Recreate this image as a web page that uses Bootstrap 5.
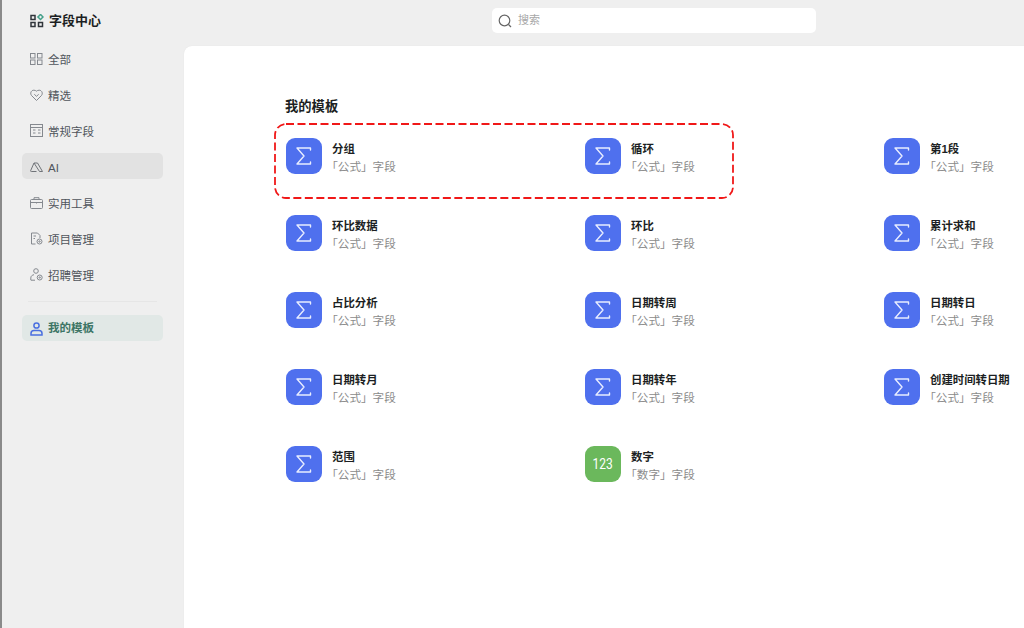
<!DOCTYPE html>
<html lang="zh">
<head>
<meta charset="utf-8">
<title>字段中心</title>
<link rel="stylesheet" href="https://cdn.jsdelivr.net/npm/bootstrap@5.3.0/dist/css/bootstrap.min.css">
<style>
html,body{height:100%;overflow:hidden}
body{background:#efefef;font-family:"Liberation Sans","Noto Sans CJK SC",sans-serif;font-size:12px;color:#1f2329}
.app-shell{height:628px;border-left:2px solid #8a8a8a}
.side-pane{width:182px;flex:none}
.brand-row{height:40px;padding-left:28px;padding-top:1px;gap:5px;font-size:13px;font-weight:700;color:#1c1f23}
.side-list{padding:5px 21px 0 20px;gap:10px}
.side-item{height:26px;border-radius:5px;padding:1px 0 0 8px;gap:5px;color:#50555c;font-size:11.500px}
.side-item svg{flex:none}
.side-item span{margin-top:4px}
.side-item.is-hover{background:#e2e2e2}
.side-item.is-active{background:#e1e8e6;color:#3d7565;font-weight:700}
.side-item.is-active span{margin-top:0}
.side-rule{height:1px;background:#e6e6e6;margin:4px 6px 3px 6px}
.main-pane{min-width:0}
.top-bar{height:46px;padding:8px 0 0 308px;flex:none}
.search-box{width:324px;height:25px;background:#fff;border-radius:5px;padding-left:6px;gap:6px;color:#a8a8a8;font-size:11px}
.canvas-pane{background:#fff;border-top-left-radius:8px;box-shadow:0 0 1px #dcdcdc;padding:51px 0 0 101px;overflow:hidden;min-height:0}
.sec-title{font-size:13.300px;font-weight:700;line-height:20px;color:#1c1f23;margin-bottom:21px}
.field-grid{display:grid;grid-template-columns:repeat(3,299px);grid-auto-rows:36px;row-gap:41px;width:897px;margin-left:1px}
.field-cell{gap:10px}
.field-icon{width:36px;height:36px;border-radius:9px;background:#4f70ee;flex:none;color:#fff}
.field-icon.is-num{background:#6bb85c;font-family:Roboto,sans-serif;font-size:15px}
.num-glyphs{display:inline-block;transform:scaleX(.8)}
.field-copy{margin-top:3px}
.field-name{font-size:11.400px;font-weight:700;line-height:18px;color:#1c1f23}
.field-sub{font-size:11.600px;line-height:18px;color:#8b8b8b;text-indent:-5.800px}
.pick-frame{position:absolute;left:-12px;top:-15px;pointer-events:none}
</style>
</head>
<body>
<svg width="0" height="0" class="position-absolute">
  <defs>
    <symbol id="sig" viewBox="0 0 36 36"><path d="M24.500 12V10H11l7 8-7 8h13.500v-2" fill="none" stroke="#e8edff" stroke-width="1.400" stroke-linejoin="round" stroke-linecap="round"/></symbol>
  </defs>
</svg>
<div class="app-shell d-flex">
  <aside class="side-pane d-flex flex-column">
    <div class="brand-row d-flex align-items-center">
      <svg width="14" height="14" viewBox="0 0 14 14" fill="none" stroke="#30353b" stroke-width="1.500"><rect x="1" y="1.500" width="4" height="4"/><rect x="1" y="8.500" width="4" height="4"/><rect x="8.500" y="8.500" width="4" height="4"/><rect x="8.700" y="1.200" width="3.600" height="3.600" transform="rotate(45 10.500 3)" stroke="#45a08a"/></svg>
      <span>字段中心</span>
    </div>
    <nav class="side-list d-flex flex-column">
      <div class="side-item d-flex align-items-center">
        <svg width="13" height="12" viewBox="0 0 13 12" fill="none" stroke="#85898f"><rect x=".5" y=".5" width="4.500" height="4.500"/><rect x="7.500" y=".5" width="4.500" height="4.500"/><rect x=".5" y="7" width="4.500" height="4.500"/><rect x="7.500" y="7" width="4.500" height="4.500"/></svg>
        <span>全部</span>
      </div>
      <div class="side-item d-flex align-items-center">
        <svg width="13" height="12" viewBox="0 0 13 12" fill="none" stroke="#85898f"><path d="M6.500 11.500 1.600 6.600C-.2 4.600 1 1.200 3.800 1.200c1.100 0 2 .3 2.700 1 .7-.7 1.600-1 2.700-1 2.800 0 4 3.400 2.200 5.400z"/><path d="M4.300 5.300 6.500 7.300l2.200-2"/></svg>
        <span>精选</span>
      </div>
      <div class="side-item d-flex align-items-center">
        <svg width="13" height="13" viewBox="0 0 13 13" fill="none" stroke="#85898f"><rect x=".5" y=".5" width="12" height="12"/><path d="M.5 3.500h12M3 6h2.500M3 9h2.500M8 6h2.500M8 9h2.500"/></svg>
        <span>常规字段</span>
      </div>
      <div class="side-item is-hover d-flex align-items-center">
        <svg width="13" height="12" viewBox="0 0 13 12" fill="none" stroke="#6f7378"><path d="M4 2 .7 9.500a.7.7 0 0 0 .6 1H6.500"/><path d="M4 2h3.500l5 8.500H9.500z"/></svg>
        <span>AI</span>
      </div>
      <div class="side-item d-flex align-items-center">
        <svg width="13" height="12" viewBox="0 0 13 12" fill="none" stroke="#85898f"><rect x=".5" y="2.500" width="12" height="9" rx="1"/><path d="M4 2.500V.7h5v1.800M.5 5.500h12M6.500 5v1.500"/></svg>
        <span>实用工具</span>
      </div>
      <div class="side-item d-flex align-items-center">
        <svg width="13" height="13" viewBox="0 0 13 13" fill="none" stroke="#85898f"><path d="M5.500 12H1.500V1h6l2.500 2.500V6"/><path d="M3.500 4H6M3.500 6.500H5"/><circle cx="9.500" cy="9.500" r="2.500"/><circle cx="9.500" cy="9.500" r=".7"/></svg>
        <span>项目管理</span>
      </div>
      <div class="side-item d-flex align-items-center">
        <svg width="13" height="13" viewBox="0 0 13 13" fill="none" stroke="#85898f"><circle cx="6" cy="3" r="2.300"/><path d="M.8 12.200V10c0-2 1.500-3 3.200-3.300"/><path d="M1 12.200h4"/><circle cx="9.700" cy="9.500" r="2.500"/><circle cx="9.700" cy="9.500" r=".7"/></svg>
        <span>招聘管理</span>
      </div>
      <div class="side-rule"></div>
      <div class="side-item is-active d-flex align-items-center">
        <svg width="13" height="14" viewBox="0 0 13 14" fill="none" stroke="#4a6fe0" stroke-width="1.500"><circle cx="6.500" cy="3.500" r="2.600"/><path d="M1 13V11.500C1 9.500 2.500 8.500 4 8.500h5c1.500 0 3 1 3 3V13z"/></svg>
        <span>我的模板</span>
      </div>
    </nav>
  </aside>
  <div class="main-pane flex-grow-1 d-flex flex-column">
    <div class="top-bar">
      <div class="search-box d-flex align-items-center">
        <svg width="14" height="14" viewBox="0 0 14 14" fill="none" stroke="#666" stroke-width="1.200"><circle cx="6.500" cy="6.500" r="5.300"/><path d="M10.500 10.500 13 13"/></svg>
        <span>搜索</span>
      </div>
    </div>
    <main class="canvas-pane flex-grow-1">
      <div class="sec-title">我的模板</div>
      <div class="field-grid position-relative">
        <svg class="pick-frame" width="460" height="76" fill="none"><rect x="1" y="1" width="458" height="74" rx="11" stroke="#f01818" stroke-width="1.800" stroke-dasharray="8 3.500"/></svg>
        <div class="field-cell d-flex align-items-center"><div class="field-icon"><svg width="36" height="36"><use href="#sig"/></svg></div><div class="field-copy"><div class="field-name">分组</div><div class="field-sub">「公式」字段</div></div></div>
        <div class="field-cell d-flex align-items-center"><div class="field-icon"><svg width="36" height="36"><use href="#sig"/></svg></div><div class="field-copy"><div class="field-name">循环</div><div class="field-sub">「公式」字段</div></div></div>
        <div class="field-cell d-flex align-items-center"><div class="field-icon"><svg width="36" height="36"><use href="#sig"/></svg></div><div class="field-copy"><div class="field-name">第1段</div><div class="field-sub">「公式」字段</div></div></div>
        <div class="field-cell d-flex align-items-center"><div class="field-icon"><svg width="36" height="36"><use href="#sig"/></svg></div><div class="field-copy"><div class="field-name">环比数据</div><div class="field-sub">「公式」字段</div></div></div>
        <div class="field-cell d-flex align-items-center"><div class="field-icon"><svg width="36" height="36"><use href="#sig"/></svg></div><div class="field-copy"><div class="field-name">环比</div><div class="field-sub">「公式」字段</div></div></div>
        <div class="field-cell d-flex align-items-center"><div class="field-icon"><svg width="36" height="36"><use href="#sig"/></svg></div><div class="field-copy"><div class="field-name">累计求和</div><div class="field-sub">「公式」字段</div></div></div>
        <div class="field-cell d-flex align-items-center"><div class="field-icon"><svg width="36" height="36"><use href="#sig"/></svg></div><div class="field-copy"><div class="field-name">占比分析</div><div class="field-sub">「公式」字段</div></div></div>
        <div class="field-cell d-flex align-items-center"><div class="field-icon"><svg width="36" height="36"><use href="#sig"/></svg></div><div class="field-copy"><div class="field-name">日期转周</div><div class="field-sub">「公式」字段</div></div></div>
        <div class="field-cell d-flex align-items-center"><div class="field-icon"><svg width="36" height="36"><use href="#sig"/></svg></div><div class="field-copy"><div class="field-name">日期转日</div><div class="field-sub">「公式」字段</div></div></div>
        <div class="field-cell d-flex align-items-center"><div class="field-icon"><svg width="36" height="36"><use href="#sig"/></svg></div><div class="field-copy"><div class="field-name">日期转月</div><div class="field-sub">「公式」字段</div></div></div>
        <div class="field-cell d-flex align-items-center"><div class="field-icon"><svg width="36" height="36"><use href="#sig"/></svg></div><div class="field-copy"><div class="field-name">日期转年</div><div class="field-sub">「公式」字段</div></div></div>
        <div class="field-cell d-flex align-items-center"><div class="field-icon"><svg width="36" height="36"><use href="#sig"/></svg></div><div class="field-copy"><div class="field-name">创建时间转日期</div><div class="field-sub">「公式」字段</div></div></div>
        <div class="field-cell d-flex align-items-center"><div class="field-icon"><svg width="36" height="36"><use href="#sig"/></svg></div><div class="field-copy"><div class="field-name">范围</div><div class="field-sub">「公式」字段</div></div></div>
        <div class="field-cell d-flex align-items-center"><div class="field-icon is-num d-flex align-items-center justify-content-center"><span class="num-glyphs">123</span></div><div class="field-copy"><div class="field-name">数字</div><div class="field-sub">「数字」字段</div></div></div>
      </div>
    </main>
  </div>
</div>
<script src="https://cdn.jsdelivr.net/npm/bootstrap@5.3.0/dist/js/bootstrap.bundle.min.js"></script>
</body>
</html>
